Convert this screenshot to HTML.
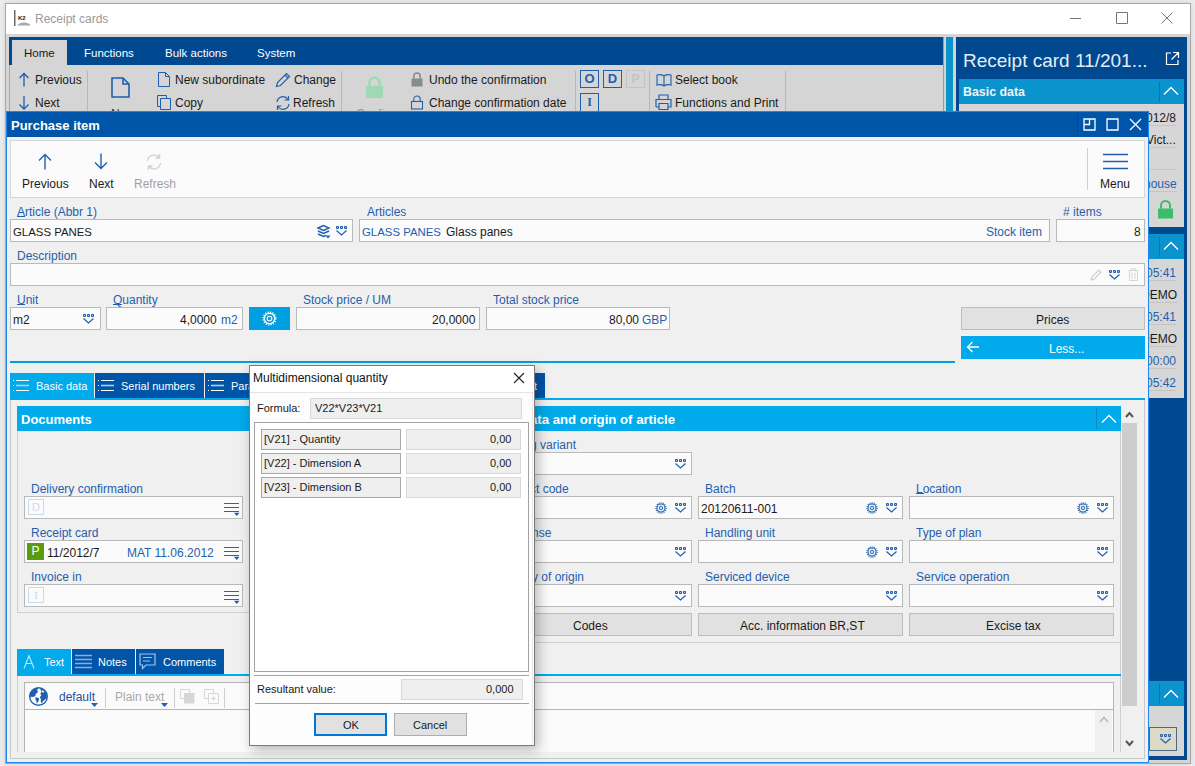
<!DOCTYPE html>
<html><head><meta charset="utf-8">
<style>
*{box-sizing:border-box;margin:0;padding:0}
html,body{width:1195px;height:766px;overflow:hidden;background:#ededed;font-family:"Liberation Sans",sans-serif;font-size:12px;color:#1a1a1a}
.a{position:absolute}
.t{position:absolute;font-size:12px;line-height:16px;white-space:nowrap;margin-top:1px}
.d{margin-top:0}
.lb{color:#1f5fae}
.inp{position:absolute;background:#fbfbfb;border:1px solid #b9b9b9}
.btn{position:absolute;background:#e1e1e1;border:1px solid #bdbdbd;text-align:center}
svg{position:absolute;overflow:visible}
</style></head><body>
<svg width="0" height="0" style="position:absolute">
<defs>
<symbol id="dd" viewBox="0 0 12 10"><path d="M0.5 0.5h2v2h-2z M4.5 0.5h2v2h-2z M8.5 0.5h2v2h-2z" fill="#a8c2e2" stroke="#1f5fae" stroke-width="1"/><path d="M0.5 4.5L5.5 9L10.5 4.5" fill="none" stroke="#1f5fae" stroke-width="1.2"/></symbol>
<symbol id="gear" viewBox="0 0 12 12"><circle cx="6" cy="6" r="5.1" fill="none" stroke="#1f5fae" stroke-width="1.3" stroke-dasharray="1 1.1"/><circle cx="6" cy="6" r="4" fill="none" stroke="#1f5fae" stroke-width="1.1"/><circle cx="6" cy="6" r="1.8" fill="#c8d8ee" stroke="#1f5fae" stroke-width="0.9"/></symbol>
<symbol id="ham" viewBox="0 0 18 14"><path d="M1 1.5H16 M1 5.5H16 M1 9.5H16" fill="none" stroke="#2a64b0" stroke-width="1"/><path d="M11 10.8H16.5L13.75 14Z" fill="#1f5fae"/></symbol>
</defs></svg>


<!-- outer window -->
<div class="a" style="left:5px;top:3px;width:1186px;height:761px;border:1px solid #a8a8a8;background:#d5d5d5;box-shadow:0 0 6px rgba(0,0,0,0.12)"></div>
<!-- title bar -->
<div class="a" style="left:6px;top:4px;width:1184px;height:30px;background:#fff"></div>
<div class="t d" style="left:35px;top:11px;color:#9a9a9a;font-size:12px">Receipt cards</div>
<svg style="left:14px;top:10px" width="17" height="17" viewBox="0 0 17 17"><rect x="0" y="0" width="1.5" height="16" fill="#6a6a6a"/><text x="4" y="10" font-family="Liberation Sans" font-weight="bold" font-size="6" fill="#222">K2</text><path d="M3 15.5C6 12 11 11.5 16 14L16 15.5Z" fill="#a8a8a8"/></svg>
<div class="a" style="left:1070px;top:18px;width:11px;height:1px;background:#777"></div>
<svg style="left:1116px;top:12px" width="12" height="12" viewBox="0 0 12 12"><path d="M0.5 0.5H11.5V11.5H0.5Z" fill="none" stroke="#777" stroke-width="1"/></svg>
<svg style="left:1161px;top:12px" width="12" height="12" viewBox="0 0 12 12"><path d="M0.5 0.5L11.5 11.5M11.5 0.5L0.5 11.5" fill="none" stroke="#777" stroke-width="1"/></svg>


<!-- ribbon -->
<div class="a" style="left:9px;top:37px;width:934px;height:28px;background:#00488f"></div>
<div class="a" style="left:9px;top:65px;width:934px;height:46px;background:#d5d5d5;border-left:1px solid #a9a9a9"></div>
<div class="a" style="left:12px;top:40px;width:55px;height:25px;background:#d5d5d5"></div>
<div class="t d" style="left:24px;top:45px;font-size:11.5px">Home</div>
<div class="t d" style="left:84px;top:45px;color:#fff;font-size:11.5px">Functions</div>
<div class="t d" style="left:165px;top:45px;color:#fff;font-size:11.5px">Bulk actions</div>
<div class="t d" style="left:257px;top:45px;color:#fff;font-size:11.5px">System</div>


<!-- ribbon content -->
<svg style="left:17px;top:72px" width="14" height="16" viewBox="0 0 14 16"><path d="M7 1.5V14.5M2.5 6L7 1.5L11.5 6" fill="none" stroke="#1f5fae" stroke-width="1.3"/></svg>
<div class="t d" style="left:35px;top:72px">Previous</div>
<svg style="left:17px;top:95px" width="14" height="16" viewBox="0 0 14 16"><path d="M7 1V14M2.5 9.5L7 14L11.5 9.5" fill="none" stroke="#1f5fae" stroke-width="1.3"/></svg>
<div class="t d" style="left:35px;top:95px">Next</div>
<div class="a" style="left:87px;top:71px;width:1px;height:40px;background:#b8b8b8"></div>
<svg style="left:111px;top:77px" width="19" height="21" viewBox="0 0 19 21"><path d="M1 1H12L18 7V20H1Z M12 1V7H18" fill="none" stroke="#1f5fae" stroke-width="1.6"/></svg>
<div class="t d" style="left:111px;top:106px;color:#333">New</div>
<div class="t d" style="left:356px;top:106px;color:#999">Confirm</div>
<svg style="left:158px;top:72px" width="12" height="15" viewBox="0 0 12 15"><path d="M0.5 0.5H7.5L11.5 4.5V14.5H0.5Z M7.5 0.5V4.5H11.5" fill="none" stroke="#1f5fae" stroke-width="1"/></svg>
<div class="t d" style="left:175px;top:72px">New subordinate</div>
<svg style="left:157px;top:95px" width="15" height="15" viewBox="0 0 15 15"><path d="M0.5 0.5H9.5V3.5 M0.5 0.5V11.5H3.5 M3.5 3.5H13.5V14.5H3.5Z" fill="none" stroke="#1f5fae" stroke-width="1"/></svg>
<div class="t d" style="left:175px;top:95px">Copy</div>
<svg style="left:275px;top:72px" width="16" height="16" viewBox="0 0 16 16"><path d="M1.5 14.5L2.5 10.5L11.5 1.5L14.5 4.5L5.5 13.5Z M10 3L13 6" fill="none" stroke="#1f5fae" stroke-width="1.2"/></svg>
<div class="t d" style="left:294px;top:72px">Change</div>
<svg style="left:275px;top:95px" width="16" height="16" viewBox="0 0 16 16"><path d="M2 7A6 6 0 0 1 13 4.5M14 9A6 6 0 0 1 3 11.5 M13.5 1V5H9.5 M2.5 15V11H6.5" fill="none" stroke="#1f5fae" stroke-width="1.2"/></svg>
<div class="t d" style="left:293px;top:95px">Refresh</div>
<div class="a" style="left:341px;top:71px;width:1px;height:40px;background:#b8b8b8"></div>
<svg style="left:365px;top:76px" width="19" height="23" viewBox="0 0 19 23"><path d="M4.5 10V6.5A5 5 0 0 1 14.5 6.5V10" fill="none" stroke="#9fd8b3" stroke-width="2.4"/><rect x="1" y="10" width="17" height="12" fill="#9fd8b3"/></svg>
<svg style="left:411px;top:72px" width="12" height="15" viewBox="0 0 12 15"><path d="M2.8 6.5V4.2A3.2 3.2 0 0 1 9.2 4.2V6.5" fill="none" stroke="#8a8a8a" stroke-width="1.6"/><rect x="0.5" y="6.5" width="11" height="8" fill="#8a8a8a"/></svg>
<div class="t d" style="left:429px;top:72px">Undo the confirmation</div>
<svg style="left:411px;top:95px" width="12" height="15" viewBox="0 0 12 15"><path d="M2.8 6.5V4.2A3.2 3.2 0 0 1 9.2 4.2V6.5" fill="none" stroke="#1f5fae" stroke-width="1.1"/><rect x="0.5" y="6.5" width="11" height="7.5" fill="none" stroke="#1f5fae" stroke-width="1.1"/></svg>
<div class="t d" style="left:429px;top:95px">Change confirmation date</div>
<div class="a" style="left:575px;top:71px;width:1px;height:40px;background:#b8b8b8"></div>
<div class="a" style="left:580px;top:70px;width:19px;height:18px;border:1.5px solid #1f5fae;color:#1f5fae;font-weight:bold;font-size:13px;line-height:15px;text-align:center">O</div>
<div class="a" style="left:603px;top:70px;width:19px;height:18px;border:1.5px solid #1f5fae;color:#1f5fae;font-weight:bold;font-size:13px;line-height:15px;text-align:center">D</div>
<div class="a" style="left:626px;top:70px;width:19px;height:18px;border:1px solid #c4c4c4;color:#c4c4c4;font-weight:bold;font-size:12px;line-height:16px;text-align:center">P</div>
<div class="a" style="left:580px;top:93px;width:19px;height:20px;border:1.5px solid #1f5fae;color:#1f5fae;font-weight:bold;font-size:12px;line-height:17px;text-align:center;font-family:'Liberation Serif',serif">I</div>
<div class="a" style="left:649px;top:71px;width:1px;height:40px;background:#b8b8b8"></div>
<svg style="left:656px;top:73px" width="16" height="14" viewBox="0 0 16 14"><path d="M8 3V13 M8 3C6 1.5 3 1.5 1 2V12C3 11.5 6 11.5 8 13C10 11.5 13 11.5 15 12V2C13 1.5 10 1.5 8 3Z" fill="none" stroke="#1f5fae" stroke-width="1.1"/></svg>
<div class="t d" style="left:675px;top:72px">Select book</div>
<svg style="left:655px;top:94px" width="17" height="16" viewBox="0 0 17 16"><path d="M4 5V1H13V5 M1 13V5.5H16V13H13 M4 13H1 M4 9.5H13V15.5H4Z" fill="none" stroke="#1f5fae" stroke-width="1.2"/></svg>
<div class="t d" style="left:675px;top:95px">Functions and Print</div>
<div class="a" style="left:785px;top:71px;width:1px;height:40px;background:#b8b8b8"></div>

<!-- separator strip -->
<div class="a" style="left:943px;top:37px;width:13px;height:74px;background:#d2d2d2;border-left:1px solid #9a9a9a"></div>
<div class="a" style="left:946px;top:37px;width:7px;height:74px;background:#0a93cc"></div>

<!-- right panel -->
<div class="a" style="left:956px;top:37px;width:231px;height:723px;background:#00488f"></div>


<!-- right panel content -->
<div class="t d" style="left:963px;top:50px;color:#e6edf5;font-size:19px;line-height:22px">Receipt card 11/201...</div>
<svg style="left:1165px;top:51px" width="15" height="15" viewBox="0 0 15 15"><path d="M6 2H1.5V13.5H13V9 M8 1.5H13.5V7 M13.5 1.5L6.5 8.5" fill="none" stroke="#fff" stroke-width="1.2"/></svg>
<div class="a" style="left:959px;top:79px;width:225px;height:25px;background:#0a93cc"></div>
<div class="t d" style="left:963px;top:84px;color:#eaf4fa;font-weight:bold;font-size:12.4px">Basic data</div>
<div class="a" style="left:1159px;top:82px;width:1px;height:20px;background:#0877a8"></div>
<svg style="left:1163px;top:86px" width="16" height="10" viewBox="0 0 16 10"><path d="M1 8.5L8 1.5L15 8.5" fill="none" stroke="#fff" stroke-width="1.3"/></svg>
<div class="a" style="left:959px;top:104px;width:225px;height:123px;background:#d6d6d6"></div>
<div class="a" style="left:1140px;top:125px;width:37px;height:1px;background:#c4c4c4"></div>
<div class="a" style="left:1140px;top:147px;width:37px;height:1px;background:#c4c4c4"></div>
<div class="a" style="left:1140px;top:169px;width:37px;height:1px;background:#c4c4c4"></div>
<div class="a" style="left:1140px;top:191px;width:37px;height:1px;background:#c4c4c4"></div>
<div class="t" style="left:1146px;top:110px;margin-top:0">012/8</div>
<div class="t" style="left:1146px;top:132px;margin-top:0">Vict...</div>
<div class="t lb" style="left:1144px;top:176px;margin-top:0">house</div>
<svg style="left:1157px;top:200px" width="17" height="19" viewBox="0 0 17 19"><path d="M4 8.5V5.5A4.5 4.5 0 0 1 13 5.5V8.5" fill="none" stroke="#3bbd6c" stroke-width="2"/><rect x="1" y="8.5" width="15" height="10" fill="#3bbd6c"/></svg>
<div class="a" style="left:959px;top:234px;width:225px;height:25px;background:#0a93cc"></div>
<div class="a" style="left:1159px;top:237px;width:1px;height:20px;background:#0877a8"></div>
<svg style="left:1163px;top:241px" width="16" height="10" viewBox="0 0 16 10"><path d="M1 8.5L8 1.5L15 8.5" fill="none" stroke="#fff" stroke-width="1.3"/></svg>
<div class="a" style="left:959px;top:259px;width:225px;height:139px;background:#d6d6d6"></div>
<div class="a" style="left:1140px;top:280px;width:37px;height:1px;background:#c4c4c4"></div>
<div class="a" style="left:1140px;top:302px;width:37px;height:1px;background:#c4c4c4"></div>
<div class="a" style="left:1140px;top:324px;width:37px;height:1px;background:#c4c4c4"></div>
<div class="a" style="left:1140px;top:346px;width:37px;height:1px;background:#c4c4c4"></div>
<div class="a" style="left:1140px;top:368px;width:37px;height:1px;background:#c4c4c4"></div>
<div class="a" style="left:1140px;top:390px;width:37px;height:1px;background:#c4c4c4"></div>
<div class="t lb" style="left:1146px;top:265px;margin-top:0">05:41</div>
<div class="t" style="left:1141px;top:287px;margin-top:0">DEMO</div>
<div class="t lb" style="left:1146px;top:309px;margin-top:0">05:41</div>
<div class="t" style="left:1141px;top:331px;margin-top:0">DEMO</div>
<div class="t lb" style="left:1146px;top:353px;margin-top:0">00:00</div>
<div class="t lb" style="left:1146px;top:375px;margin-top:0">05:42</div>
<div class="a" style="left:959px;top:681px;width:225px;height:25px;background:#0a93cc"></div>
<div class="a" style="left:1159px;top:684px;width:1px;height:20px;background:#0877a8"></div>
<svg style="left:1163px;top:689px" width="16" height="10" viewBox="0 0 16 10"><path d="M1 8.5L8 1.5L15 8.5" fill="none" stroke="#fff" stroke-width="1.3"/></svg>
<div class="a" style="left:959px;top:706px;width:225px;height:50px;background:#d6d6d6"></div>
<div class="a" style="left:1149px;top:727px;width:28px;height:24px;background:#dcdac4;border:1px solid #4a6a80"></div>
<svg style="left:1160px;top:734px" width="12" height="10"><use href="#dd"/></svg>

<!-- purchase item window -->
<div id="pw" class="a" style="left:6px;top:111px;width:1143px;height:652px;background:#f0f0f0;border:1px solid #1e86ee;border-top:none"></div>
<div class="a" style="left:6px;top:111px;width:1143px;height:26px;background:#0055a8;border-top:1px solid #1e86ee;border-left:1px solid #1e86ee;border-right:1px solid #1e86ee"></div>
<div class="t" style="left:11px;top:117px;color:#fff;font-weight:bold;font-size:13px">Purchase item</div>

<!-- toolbar box -->
<div class="a" style="left:10px;top:140px;width:1135px;height:58px;background:#fbfbfb;border:1px solid #d6d6d6"></div>
<div class="t" style="left:22px;top:175px">Previous</div>
<div class="t" style="left:89px;top:175px">Next</div>
<div class="t" style="left:134px;top:175px;color:#a0a0a0">Refresh</div>
<div class="t" style="left:1100px;top:175px">Menu</div>

<!-- title icons -->
<div class="a" style="left:1077px;top:114px;width:1px;height:21px;background:#08427e"></div>
<svg style="left:1083px;top:118px" width="13" height="13" viewBox="0 0 13 13"><path d="M1 1H12V12H1Z M1 6.5H6.5V1" fill="none" stroke="#fff" stroke-width="1.3"/></svg>
<svg style="left:1106px;top:118px" width="13" height="13" viewBox="0 0 13 13"><path d="M1 1H12V12H1Z" fill="none" stroke="#fff" stroke-width="1.3"/></svg>
<svg style="left:1129px;top:118px" width="13" height="13" viewBox="0 0 13 13"><path d="M1 1L12 12M12 1L1 12" fill="none" stroke="#fff" stroke-width="1.3"/></svg>

<svg style="left:37px;top:153px" width="16" height="17" viewBox="0 0 16 17"><path d="M8 1.5V16.5M2 7.5L8 1.5L14 7.5" fill="none" stroke="#1f5fae" stroke-width="1.4"/></svg>
<svg style="left:93px;top:153px" width="16" height="17" viewBox="0 0 16 17"><path d="M8 0.5V15.5M2 9.5L8 15.5L14 9.5" fill="none" stroke="#1f5fae" stroke-width="1.4"/></svg>
<svg style="left:145px;top:153px" width="18" height="18" viewBox="0 0 18 18"><path d="M2.5 8A6.5 6.5 0 0 1 14 4.5M15.5 10A6.5 6.5 0 0 1 4 13.5 M14.5 1V5H10.5 M3.5 17V13H7.5" fill="none" stroke="#d4d4d4" stroke-width="1.5"/></svg>
<div class="a" style="left:1087px;top:148px;width:1px;height:42px;background:#d0d0d0"></div>
<svg style="left:1103px;top:153px" width="25" height="17" viewBox="0 0 25 17"><path d="M0 1.5H25M0 8.5H25M0 15.5H25" fill="none" stroke="#1f5fae" stroke-width="1.3"/></svg>

<!-- row: article -->
<div class="t lb" style="left:17px;top:203px">Article (Abbr 1)</div>
<div class="a" style="left:17px;top:216px;width:8px;height:1px;background:#1f5fae"></div>
<div class="inp" style="left:10px;top:219px;width:343px;height:23px"></div>
<div class="t" style="left:13px;top:223px;font-size:11.4px">GLASS PANES</div>
<svg style="left:317px;top:225px" width="14" height="14" viewBox="0 0 14 14"><path d="M1 3L6.5 0.5L12 3L6.5 5.5Z M1 6L6.5 8.5L12 6 M1 9L6.5 11.5L9 10.3" fill="none" stroke="#1f5fae" stroke-width="1.4"/><path d="M8.5 10.5H13.5L11 13.5Z" fill="#1f5fae"/></svg>
<svg style="left:336px;top:226px" width="12" height="10"><use href="#dd"/></svg>
<div class="t lb" style="left:367px;top:203px">Articles</div>
<div class="inp" style="left:359px;top:219px;width:691px;height:23px"></div>
<div class="t lb" style="left:362px;top:223px;font-size:11.4px">GLASS PANES</div>
<div class="t" style="left:446px;top:223px">Glass panes</div>
<div class="t lb" style="left:986px;top:223px">Stock item</div>
<div class="t lb" style="left:1063px;top:203px"># items</div>
<div class="inp" style="left:1056px;top:219px;width:89px;height:23px"></div>
<div class="t" style="left:1134px;top:223px">8</div>

<!-- description -->
<div class="t lb" style="left:17px;top:247px">Description</div>
<div class="inp" style="left:10px;top:263px;width:1135px;height:23px"></div>
<svg style="left:1090px;top:269px" width="12" height="12" viewBox="0 0 12 12"><path d="M1 11L1.8 8L8.8 1L11 3.2L4 10.2Z" fill="none" stroke="#cfcfcf" stroke-width="1.2"/></svg>
<svg style="left:1109px;top:270px" width="12" height="10"><use href="#dd"/></svg>
<svg style="left:1128px;top:268px" width="11" height="13" viewBox="0 0 11 13"><path d="M0.5 2.5H10.5 M3.5 2.5V0.8H7.5V2.5 M1.5 2.5V12.5H9.5V2.5 M4 4.5V11 M7 4.5V11" fill="none" stroke="#d6d6d6" stroke-width="1"/></svg>

<!-- unit row -->
<div class="t lb" style="left:17px;top:291px">Unit</div>
<div class="a" style="left:17px;top:304px;width:8px;height:1px;background:#1f5fae"></div>
<div class="inp" style="left:10px;top:307px;width:91px;height:23px"></div>
<div class="t" style="left:13px;top:311px">m2</div>
<svg style="left:83px;top:314px" width="12" height="10"><use href="#dd"/></svg>
<div class="t lb" style="left:113px;top:291px">Quantity</div>
<div class="a" style="left:113px;top:304px;width:9px;height:1px;background:#1f5fae"></div>
<div class="inp" style="left:106px;top:307px;width:137px;height:23px"></div>
<div class="t" style="left:180px;top:311px">4,0000</div>
<div class="t lb" style="left:221px;top:311px">m2</div>
<div class="a" style="left:249px;top:307px;width:41px;height:23px;background:#00a0e0"></div>
<svg style="left:262px;top:311px" width="15" height="15" viewBox="0 0 15 15"><circle cx="7.5" cy="7.5" r="6.3" fill="none" stroke="#fff" stroke-width="1.5" stroke-dasharray="1.2 1.25"/><circle cx="7.5" cy="7.5" r="5.1" fill="none" stroke="#fff" stroke-width="1.2"/><circle cx="7.5" cy="7.5" r="2.3" fill="none" stroke="#fff" stroke-width="1.1"/></svg>
<div class="t lb" style="left:303px;top:291px">Stock price / UM</div>
<div class="inp" style="left:296px;top:307px;width:184px;height:23px"></div>
<div class="t" style="left:432px;top:311px">20,0000</div>
<div class="t lb" style="left:493px;top:291px">Total stock price</div>
<div class="inp" style="left:486px;top:307px;width:184px;height:23px"></div>
<div class="t" style="left:609px;top:311px">80,00</div>
<div class="t lb" style="left:642px;top:311px">GBP</div>
<div class="btn" style="left:961px;top:307px;width:184px;height:23px"></div>
<div class="t" style="left:1036px;top:311px">Prices</div>
<div class="a" style="left:961px;top:336px;width:184px;height:23px;background:#00aaeb"></div>
<svg style="left:966px;top:341px" width="14" height="12" viewBox="0 0 14 12"><path d="M13 6H1.5M6.5 1L1.5 6L6.5 11" fill="none" stroke="#fff" stroke-width="1.3"/></svg>
<div class="t" style="left:1049px;top:340px;color:#fff">Less...</div>
<div class="a" style="left:10px;top:361px;width:945px;height:2px;background:#00a0e0"></div>

<!-- tabs -->
<div class="a" style="left:10px;top:373px;width:84px;height:27px;background:#00aaeb"></div>
<div class="a" style="left:95px;top:373px;width:109px;height:25px;background:#0055a8"></div>
<div class="a" style="left:205px;top:373px;width:340px;height:25px;background:#0055a8"></div>
<div class="a" style="left:10px;top:398px;width:1135px;height:2px;background:#00aaeb"></div>
<svg style="left:13px;top:379px" width="17" height="13" viewBox="0 0 17 13"><path d="M0 1.5H1M0 6.5H1M0 11.5H1 M3 1.5H16M3 11.5H16" fill="none" stroke="#fff" stroke-width="1.2"/><path d="M3 6.5H16" stroke="#a9d3f0" stroke-width="1.6"/></svg>
<div class="t" style="left:36px;top:378px;color:#fff;font-size:11px;margin-top:0">Basic data</div>
<svg style="left:98px;top:379px" width="17" height="13" viewBox="0 0 17 13"><path d="M0 1.5H1M0 6.5H1M0 11.5H1 M3 1.5H16M3 11.5H16" fill="none" stroke="#fff" stroke-width="1.2"/><path d="M3 6.5H16" stroke="#a9d3f0" stroke-width="1.6"/></svg>
<div class="t" style="left:121px;top:378px;color:#fff;font-size:11px;margin-top:0">Serial numbers</div>
<svg style="left:208px;top:379px" width="17" height="13" viewBox="0 0 17 13"><path d="M0 1.5H1M0 6.5H1M0 11.5H1 M3 1.5H16M3 11.5H16" fill="none" stroke="#fff" stroke-width="1.2"/><path d="M3 6.5H16" stroke="#a9d3f0" stroke-width="1.6"/></svg>
<div class="t" style="left:231px;top:378px;color:#fff;font-size:11px;margin-top:0">Parameters</div>


<!-- tab content frame -->
<div class="a" style="left:10px;top:400px;width:1135px;height:359px;border-left:1px solid #c8c8c8;border-right:1px solid #c8c8c8;border-bottom:1px solid #c8c8c8"></div>

<!-- Documents panel -->
<div class="a" style="left:17px;top:406px;width:460px;height:207px;border:1px solid #cfcfcf;border-top:none"></div>
<div class="a" style="left:17px;top:406px;width:460px;height:25px;background:#00aaeb"></div>
<div class="t" style="left:21px;top:411px;color:#fff;font-weight:bold;font-size:13px">Documents</div>
<div class="t lb" style="left:31px;top:480px">Delivery confirmation</div>
<div class="inp" style="left:24px;top:496px;width:219px;height:23px"></div>
<div class="a" style="left:28px;top:499px;width:16px;height:16px;border:1px solid #c9daee;color:#c9daee;font-size:11px;line-height:14px;text-align:center">D</div>
<svg style="left:223px;top:502px" width="18" height="14"><use href="#ham"/></svg>
<div class="t lb" style="left:31px;top:524px">Receipt card</div>
<div class="inp" style="left:24px;top:540px;width:219px;height:23px"></div>
<div class="a" style="left:27px;top:543px;width:17px;height:17px;background:#5c9a0f;color:#fff;font-size:12px;line-height:17px;text-align:center">P</div>
<div class="t" style="left:47px;top:544px">11/2012/7</div>
<div class="t lb" style="left:127px;top:544px">MAT 11.06.2012</div>
<svg style="left:223px;top:546px" width="18" height="14"><use href="#ham"/></svg>
<div class="t lb" style="left:31px;top:568px">Invoice in</div>
<div class="inp" style="left:24px;top:584px;width:219px;height:23px"></div>
<div class="a" style="left:28px;top:587px;width:16px;height:16px;border:1px solid #c9daee;color:#c9daee;font-size:11px;line-height:14px;text-align:center;font-family:'Liberation Serif',serif">I</div>
<svg style="left:223px;top:590px" width="18" height="14"><use href="#ham"/></svg>

<!-- Basic data and origin panel -->
<div class="a" style="left:479px;top:406px;width:642px;height:237px;border:1px solid #cfcfcf;border-top:none"></div>
<div class="a" style="left:479px;top:406px;width:642px;height:25px;background:#00aaeb"></div>
<div class="t" style="left:483px;top:411px;color:#fff;font-weight:bold;font-size:13.2px">Basic data and origin of article</div>
<div class="a" style="left:1096px;top:408px;width:1px;height:21px;background:#0a86c0"></div>
<svg style="left:1101px;top:414px" width="16" height="10" viewBox="0 0 16 10"><path d="M1 8.5L8 1.5L15 8.5" fill="none" stroke="#fff" stroke-width="1.3"/></svg>

<div class="t lb" style="left:494px;top:436px">Packing variant</div>
<div class="inp" style="left:487px;top:452px;width:205px;height:23px"></div>
<svg style="left:675px;top:459px" width="12" height="10"><use href="#dd"/></svg>

<div class="t lb" style="left:498px;top:480px">Product code</div>
<div class="inp" style="left:487px;top:496px;width:205px;height:23px"></div>
<svg style="left:655px;top:502px" width="12" height="12"><use href="#gear"/></svg>
<svg style="left:675px;top:503px" width="12" height="10"><use href="#dd"/></svg>
<div class="t lb" style="left:705px;top:480px">Batch</div>
<div class="inp" style="left:698px;top:496px;width:205px;height:23px"></div>
<div class="t" style="left:701px;top:500px">20120611-001</div>
<svg style="left:866px;top:502px" width="12" height="12"><use href="#gear"/></svg>
<svg style="left:886px;top:503px" width="12" height="10"><use href="#dd"/></svg>
<div class="t lb" style="left:916px;top:480px">Location</div>
<div class="a" style="left:916px;top:493px;width:8px;height:1px;background:#1f5fae"></div>
<div class="inp" style="left:909px;top:496px;width:205px;height:23px"></div>
<svg style="left:1077px;top:502px" width="12" height="12"><use href="#gear"/></svg>
<svg style="left:1097px;top:503px" width="12" height="10"><use href="#dd"/></svg>

<div class="t lb" style="left:510px;top:524px">License</div>
<div class="inp" style="left:487px;top:540px;width:205px;height:23px"></div>
<svg style="left:675px;top:547px" width="12" height="10"><use href="#dd"/></svg>
<div class="t lb" style="left:705px;top:524px">Handling unit</div>
<div class="inp" style="left:698px;top:540px;width:205px;height:23px"></div>
<svg style="left:866px;top:546px" width="12" height="12"><use href="#gear"/></svg>
<svg style="left:886px;top:547px" width="12" height="10"><use href="#dd"/></svg>
<div class="t lb" style="left:916px;top:524px">Type of plan</div>
<div class="inp" style="left:909px;top:540px;width:205px;height:23px"></div>
<svg style="left:1097px;top:547px" width="12" height="10"><use href="#dd"/></svg>

<div class="t lb" style="left:496px;top:568px">Country of origin</div>
<div class="inp" style="left:487px;top:584px;width:205px;height:23px"></div>
<svg style="left:675px;top:591px" width="12" height="10"><use href="#dd"/></svg>
<div class="t lb" style="left:705px;top:568px">Serviced device</div>
<div class="inp" style="left:698px;top:584px;width:205px;height:23px"></div>
<svg style="left:886px;top:591px" width="12" height="10"><use href="#dd"/></svg>
<div class="t lb" style="left:916px;top:568px">Service operation</div>
<div class="inp" style="left:909px;top:584px;width:205px;height:23px"></div>
<svg style="left:1097px;top:591px" width="12" height="10"><use href="#dd"/></svg>

<div class="btn" style="left:487px;top:613px;width:205px;height:23px"></div>
<div class="t" style="left:573px;top:617px">Codes</div>
<div class="btn" style="left:698px;top:613px;width:205px;height:23px"></div>
<div class="t" style="left:740px;top:617px">Acc. information BR,ST</div>
<div class="btn" style="left:909px;top:613px;width:205px;height:23px"></div>
<div class="t" style="left:986px;top:617px">Excise tax</div>

<!-- scrollbar -->
<div class="a" style="left:1122px;top:423px;width:15px;height:283px;background:#cdcdcd"></div>
<svg style="left:1125px;top:411px" width="9" height="7" viewBox="0 0 9 7"><path d="M1 6L4.5 2L8 6" fill="none" stroke="#555" stroke-width="2"/></svg>
<svg style="left:1125px;top:740px" width="9" height="7" viewBox="0 0 9 7"><path d="M1 1L4.5 5L8 1" fill="none" stroke="#555" stroke-width="2"/></svg>
<div class="a" style="left:1120px;top:431px;width:1px;height:321px;background:#cfcfcf"></div>

<!-- text tabs -->
<div class="a" style="left:17px;top:649px;width:54px;height:27px;background:#00aaeb"></div>
<div class="a" style="left:72px;top:649px;width:63px;height:25px;background:#0055a8"></div>
<div class="a" style="left:136px;top:649px;width:88px;height:25px;background:#0055a8"></div>
<div class="a" style="left:17px;top:674px;width:1104px;height:2px;background:#00aaeb"></div>
<svg style="left:23px;top:655px" width="12" height="14" viewBox="0 0 12 14"><path d="M1 13.5L6 0.8L11 13.5M3 8.5H9" fill="none" stroke="#bfe9fb" stroke-width="1.1"/></svg>
<div class="t" style="left:44px;top:654px;color:#fff;font-size:11px;margin-top:0">Text</div>
<svg style="left:75px;top:654px" width="17" height="15" viewBox="0 0 17 15"><path d="M0 1.5H17M0 5.5H17M0 9.5H17M0 13.5H17" fill="none" stroke="#8ab0da" stroke-width="1.6"/></svg>
<div class="t" style="left:98px;top:654px;color:#fff;font-size:11px;margin-top:0">Notes</div>
<svg style="left:139px;top:653px" width="17" height="17" viewBox="0 0 17 17"><path d="M1 1H16V12H7L3.5 15.5V12H1Z M4 4.5H13M4 8H11" fill="none" stroke="#a9c4e2" stroke-width="1.2"/></svg>
<div class="t" style="left:163px;top:654px;color:#fff;font-size:11px;margin-top:0">Comments</div>
<div class="a" style="left:17px;top:676px;width:1px;height:76px;background:#cfcfcf"></div>

<!-- text editor -->
<div class="a" style="left:24px;top:682px;width:1090px;height:70px;background:#fbfbfb;border:1px solid #b4b4b4;border-bottom:none"></div>
<div class="a" style="left:25px;top:709px;width:1088px;height:1px;background:#b4b4b4"></div>
<div class="a" style="left:1095px;top:710px;width:17px;height:42px;background:#f0f0f0"></div>
<svg style="left:1099px;top:716px" width="10" height="7" viewBox="0 0 10 7"><path d="M1 6L5 1.5L9 6" fill="none" stroke="#b8b8b8" stroke-width="1.5"/></svg>
<svg style="left:29px;top:687px" width="19" height="19" viewBox="0 0 19 19"><circle cx="9.5" cy="9.5" r="8.8" fill="none" stroke="#1f5fae" stroke-width="1.4"/><path d="M0.8 8C1.5 4.5 4.5 1.3 9.2 0.9L8.2 3.5L9 5.2L6.8 6.8L6.3 9L4 10L1 9.8Z M6.5 10.2L9.8 11L10 13L8.5 15.5L7.7 16.8L7.4 14L6.3 12.2Z M10.8 1.2C14 1.8 17 4.5 17.9 8.5L17.6 11.5L15.5 12.8L13.8 14.5L12.5 16.6L11.8 14.2L11.9 12L10.8 10.2L12.4 8.2L11.2 6.5L12.8 5Z" fill="#1f5fae"/><path d="M13.3 3.2L15 3.9L14.3 5.8L12.9 5.1Z" fill="#fbfbfb"/></svg>
<div class="t" style="left:59px;top:688px;color:#1f4f9f">default</div>
<svg style="left:91px;top:703px" width="7" height="4" viewBox="0 0 7 4"><path d="M0 0H7L3.5 4Z" fill="#1f5fae"/></svg>
<div class="a" style="left:105px;top:688px;width:1px;height:20px;background:#d0d0d0"></div>
<div class="t" style="left:115px;top:688px;color:#a8a8a8">Plain text</div>
<svg style="left:161px;top:703px" width="7" height="4" viewBox="0 0 7 4"><path d="M0 0H7L3.5 4Z" fill="#1f5fae"/></svg>
<div class="a" style="left:174px;top:688px;width:1px;height:20px;background:#d0d0d0"></div>
<svg style="left:180px;top:689px" width="15" height="15" viewBox="0 0 15 15"><path d="M0.5 0.5H9.5V4 M0.5 0.5V9.5H4" fill="none" stroke="#d6d6d6" stroke-width="1"/><rect x="4" y="4" width="10.5" height="10.5" fill="#d6d6d6"/></svg>
<svg style="left:204px;top:689px" width="15" height="15" viewBox="0 0 15 15"><path d="M0.5 0.5H9.5V4 M0.5 0.5V9.5H4 M4.5 4.5H14.5V14.5H4.5Z M9.5 7V12M7 9.5H12" fill="none" stroke="#d6d6d6" stroke-width="1"/></svg>
<div class="a" style="left:224px;top:688px;width:1px;height:20px;background:#d0d0d0"></div>

<!-- bottom frame -->
<div class="a" style="left:10px;top:758px;width:1135px;height:1px;background:#c8c8c8"></div>



<div class="t" style="left:534px;top:378px;color:#fff;font-size:11px;margin-top:0">t</div>
<!-- dialog -->
<div class="a" style="left:249px;top:365px;width:286px;height:381px;background:#fdfdfd;border:1px solid #7a7a7a;box-shadow:3px 4px 12px rgba(0,0,0,0.28)"></div>
<div class="a" style="left:250px;top:366px;width:284px;height:26px;background:#fff"></div>
<div class="t d" style="left:253px;top:370px;color:#111">Multidimensional quantity</div>
<svg style="left:513px;top:372px" width="12" height="12" viewBox="0 0 12 12"><path d="M1 1L11 11M11 1L1 11" fill="none" stroke="#222" stroke-width="1.1"/></svg>
<div class="a" style="left:250px;top:392px;width:284px;height:1px;background:#e4e4e4"></div>
<div class="a" style="left:532px;top:393px;width:1px;height:350px;background:#e8e8e8"></div>
<div class="t d" style="left:257px;top:400px;font-size:11px">Formula:</div>
<div class="a" style="left:310px;top:398px;width:212px;height:21px;background:#efefef;border:1px solid #d9d9d9"></div>
<div class="t d" style="left:315px;top:400px;font-size:11px">V22*V23*V21</div>
<div class="a" style="left:254px;top:422px;width:275px;height:250px;background:#fff;border:1px solid #a3a3a3"></div>
<div class="a" style="left:261px;top:429px;width:140px;height:21px;background:#efefef;border:1px solid #a8a8a8"></div>
<div class="t d" style="left:264px;top:431px;font-size:11px">[V21] - Quantity</div>
<div class="a" style="left:406px;top:429px;width:115px;height:21px;background:#efefef;border:1px solid #d9d9d9"></div>
<div class="t d" style="left:490px;top:431px;font-size:11px">0,00</div>
<div class="a" style="left:261px;top:453px;width:140px;height:21px;background:#efefef;border:1px solid #a8a8a8"></div>
<div class="t d" style="left:264px;top:455px;font-size:11px">[V22] - Dimension A</div>
<div class="a" style="left:406px;top:453px;width:115px;height:21px;background:#efefef;border:1px solid #d9d9d9"></div>
<div class="t d" style="left:490px;top:455px;font-size:11px">0,00</div>
<div class="a" style="left:261px;top:477px;width:140px;height:21px;background:#efefef;border:1px solid #a8a8a8"></div>
<div class="t d" style="left:264px;top:479px;font-size:11px">[V23] - Dimension B</div>
<div class="a" style="left:406px;top:477px;width:115px;height:21px;background:#efefef;border:1px solid #d9d9d9"></div>
<div class="t d" style="left:490px;top:479px;font-size:11px">0,00</div>
<div class="a" style="left:254px;top:675px;width:275px;height:1px;background:#a3a3a3"></div>
<div class="t d" style="left:257px;top:681px;font-size:11px">Resultant value:</div>
<div class="a" style="left:401px;top:679px;width:122px;height:21px;background:#efefef;border:1px solid #d9d9d9"></div>
<div class="t d" style="left:486px;top:681px;font-size:11px">0,000</div>
<div class="a" style="left:255px;top:703px;width:274px;height:1px;background:#a3a3a3"></div>
<div class="a" style="left:314px;top:713px;width:73px;height:23px;background:#e1e1e1;border:2px solid #0078d7"></div>
<div class="t d" style="left:343px;top:717px;font-size:11px">OK</div>
<div class="a" style="left:394px;top:713px;width:73px;height:23px;background:#e1e1e1;border:1px solid #adadad"></div>
<div class="t d" style="left:413px;top:717px;font-size:11px">Cancel</div>

</body></html>
